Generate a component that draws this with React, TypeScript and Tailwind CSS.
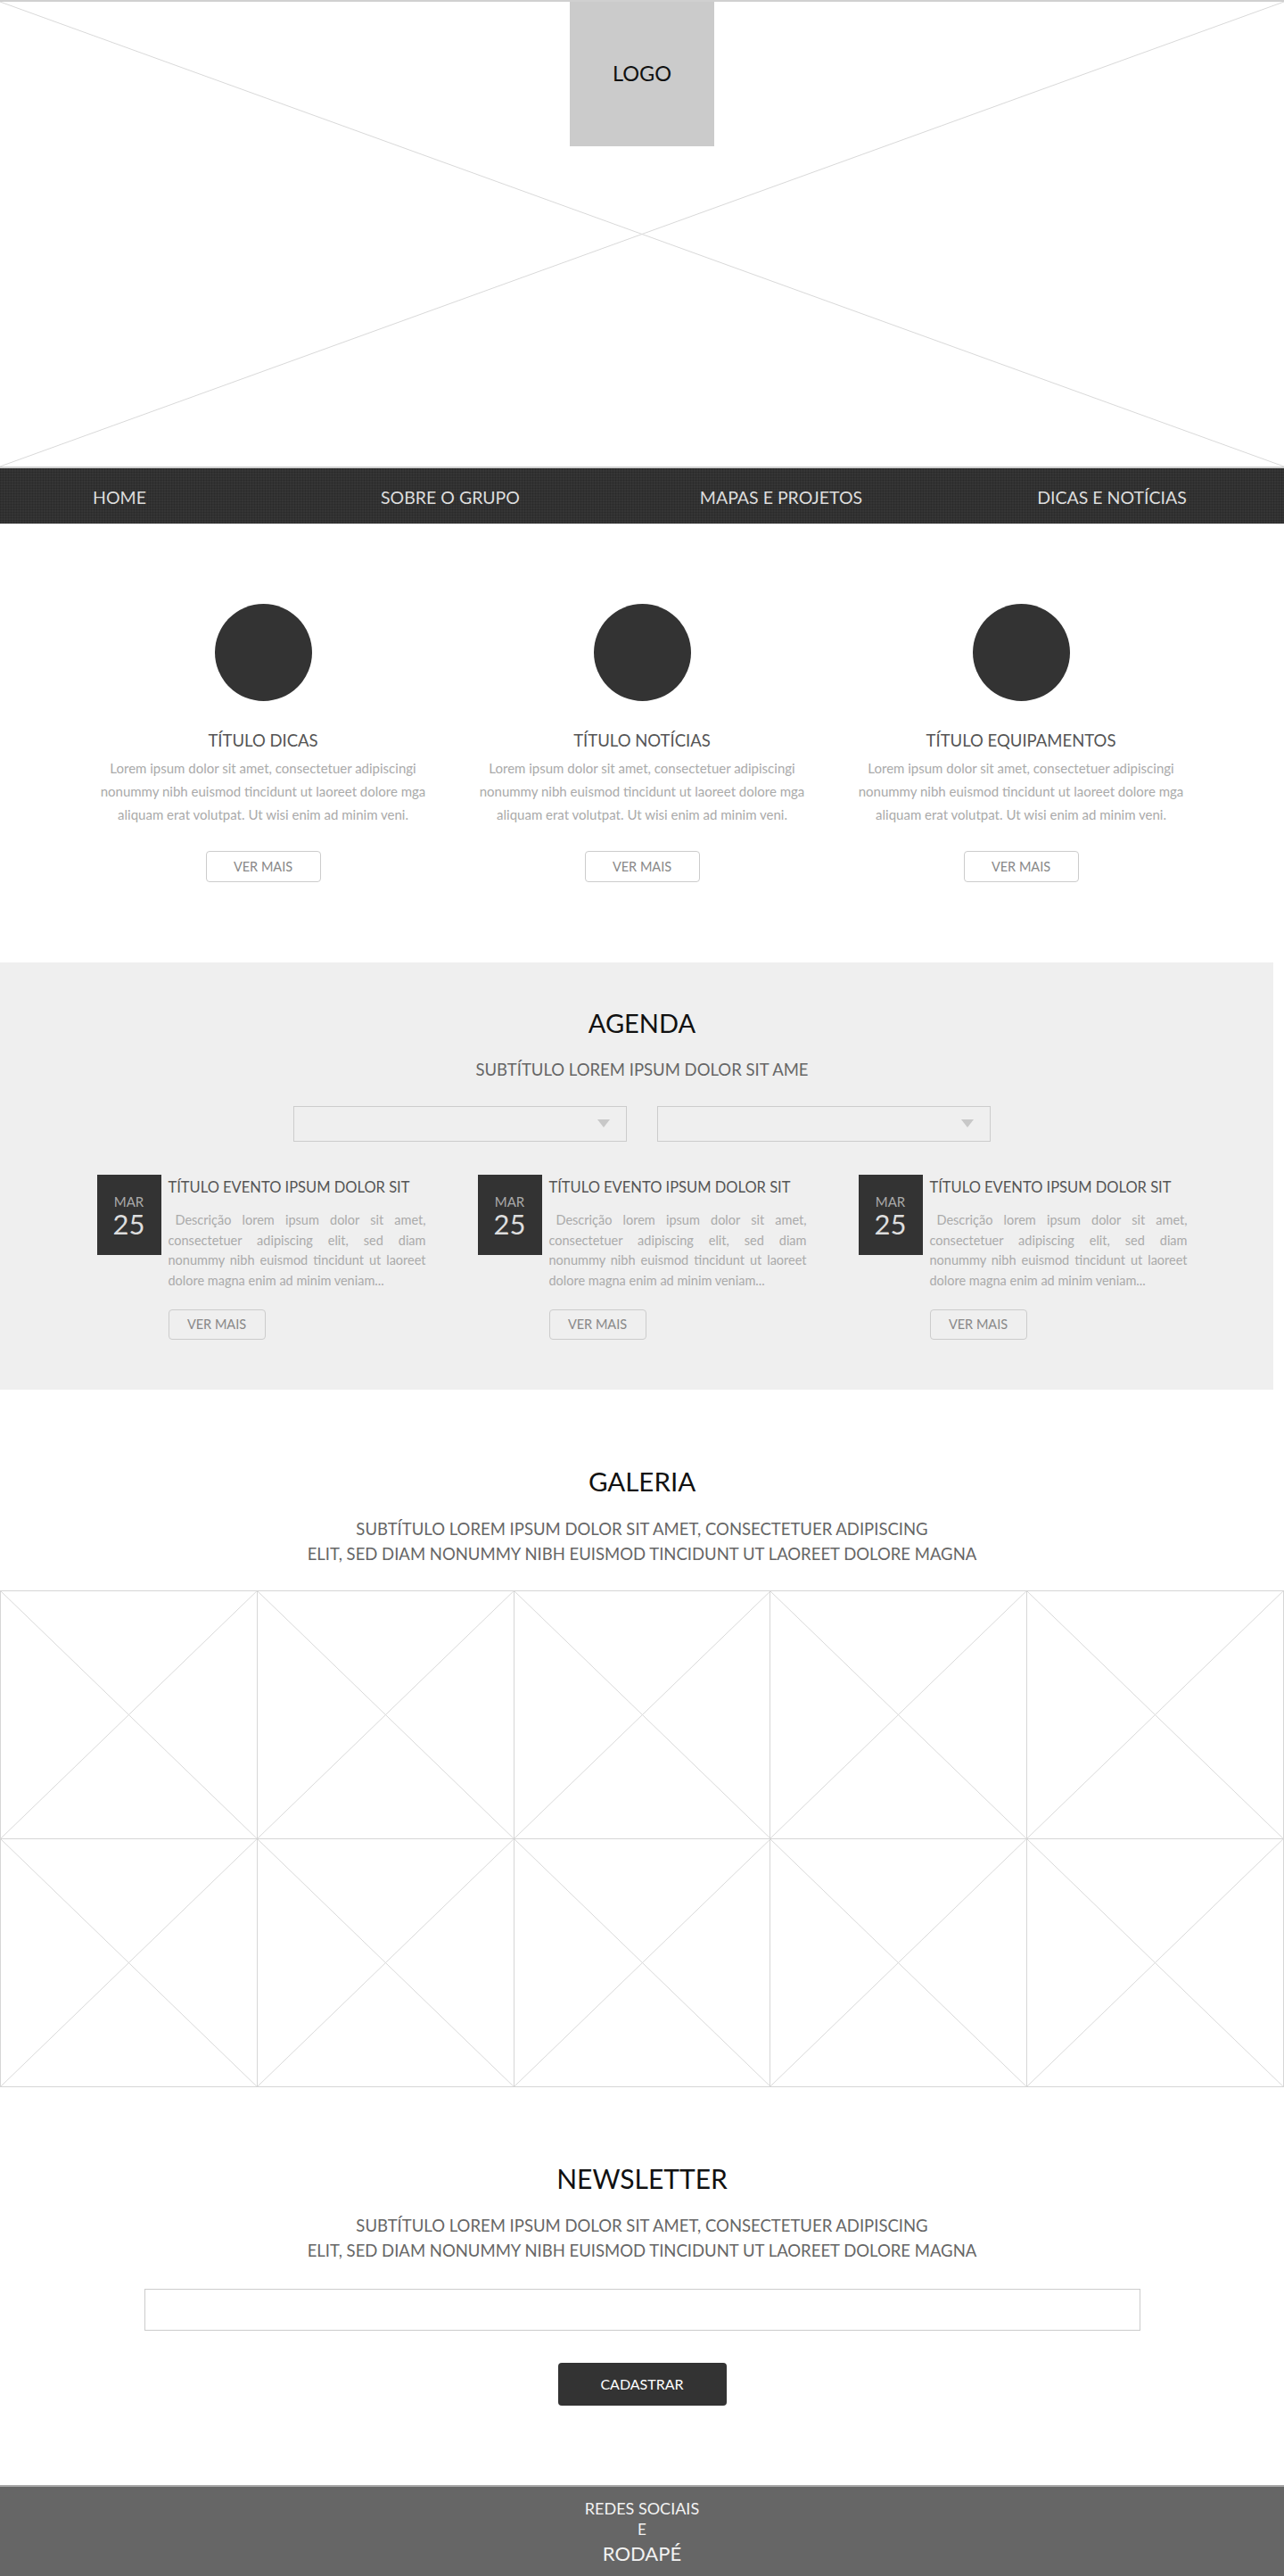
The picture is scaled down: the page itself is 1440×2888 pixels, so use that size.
import React from "react";

const features = [
  { title: "TÍTULO DICAS" },
  { title: "TÍTULO NOTÍCIAS" },
  { title: "TÍTULO EQUIPAMENTOS" },
];

function XBox({ className }: { className?: string }) {
  return (
    <svg className={className} viewBox="0 0 100 100" preserveAspectRatio="none">
      <line x1="0" y1="0" x2="100" y2="100" stroke="#d9d9d9" strokeWidth="1" vectorEffect="non-scaling-stroke" />
      <line x1="100" y1="0" x2="0" y2="100" stroke="#d9d9d9" strokeWidth="1" vectorEffect="non-scaling-stroke" />
    </svg>
  );
}

const descLines = [
  "consectetuer adipiscing elit, sed diam",
  "nonummy nibh euismod tincidunt ut laoreet",
];

function Event() {
  return (
    <div className="flex gap-[8px] w-[369px]">
      <div className="w-[72px] h-[90px] bg-[#333] flex flex-col items-center justify-center shrink-0 pt-[2px]">
        <span className="text-[15px] leading-[17px] text-[#aaa]">MAR</span>
        <span className="text-[31px] leading-[32px] text-[#ddd]">25</span>
      </div>
      <div className="w-[289px]">
        <div className="pt-[3px] text-[16.5px] leading-[22px] text-[#555] whitespace-nowrap">TÍTULO EVENTO IPSUM DOLOR SIT</div>
        <div className="mt-[15px] text-[14.5px] leading-[22.7px] text-[#aaa]">
          <div className="pl-[8px] text-justify [text-align-last:justify] whitespace-nowrap">Descrição lorem ipsum dolor sit amet,</div>
          {descLines.map((l, i) => (
            <div key={i} className="text-justify [text-align-last:justify] whitespace-nowrap">{l}</div>
          ))}
          <div className="whitespace-nowrap">dolore magna enim ad minim veniam...</div>
        </div>
        <div className="mt-[20px] w-[109px] h-[34px] border border-[#ccc] rounded-[4px] flex items-center justify-center text-[14.5px] text-[#888]">
          VER MAIS
        </div>
      </div>
    </div>
  );
}

function Select() {
  return (
    <div className="w-[374px] h-[40px] border border-[#ccc] flex items-center justify-end pr-[18px]">
      <svg width="14" height="10" viewBox="0 0 14 10">
        <polygon points="0,0 14,0 7,9" fill="#c8c8c8" />
      </svg>
    </div>
  );
}

export default function App() {
  return (
    <div className="w-[1440px] bg-white" style={{ fontFamily: "Lato, 'Open Sans', sans-serif" }}>
      {/* Hero */}
      <div className="relative h-[525px] border-t-2 border-b-2 border-[#d0d0d0]">
        <XBox className="absolute inset-0 w-full h-full" />
        <div className="relative flex justify-center">
          <div className="w-[162px] h-[162px] bg-[#cbcbcb] flex items-center justify-center text-[23.5px] text-[#111]">
            LOGO
          </div>
        </div>
      </div>

      {/* Nav */}
      <nav className="h-[62px] bg-[#353535] bg-[repeating-linear-gradient(0deg,rgba(0,0,0,0.12)_0px,rgba(0,0,0,0.12)_1px,transparent_1px,transparent_3px),repeating-linear-gradient(90deg,rgba(0,0,0,0.12)_0px,rgba(0,0,0,0.12)_1px,transparent_1px,transparent_3px)] grid grid-cols-[repeat(4,240px)] gap-x-[131px] pl-[14px] items-center text-[#ddd] text-[19.5px] pt-[3px]">
        <div className="text-center">HOME</div>
        <div className="text-center">SOBRE O GRUPO</div>
        <div className="text-center">MAPAS E PROJETOS</div>
        <div className="text-center">DICAS E NOTÍCIAS</div>
      </nav>

      {/* Features */}
      <section className="pt-[90px] pb-[90px] flex justify-center gap-[55px]">
        {features.map((f) => (
          <div key={f.title} className="w-[370px] flex flex-col items-center text-center">
            <div className="w-[109px] h-[109px] rounded-full bg-[#333]" />
            <div className="mt-[32px] text-[18.5px] leading-[24px] text-[#555]">{f.title}</div>
            <p className="mt-[6px] text-[15px] leading-[26px] text-[#aaa] whitespace-nowrap">
              Lorem ipsum dolor sit amet, consectetuer adipiscingi
              <br />
              nonummy nibh euismod tincidunt ut laoreet dolore mga
              <br />
              aliquam erat volutpat. Ut wisi enim ad minim veni.
            </p>
            <div className="mt-[28px] w-[129px] h-[35px] border border-[#ccc] rounded-[4px] flex items-center justify-center text-[14.5px] text-[#888]">
              VER MAIS
            </div>
          </div>
        ))}
      </section>

      {/* Agenda */}
      <section className="w-[1428px] bg-[#efefef] pt-[50px] pb-[56px] flex flex-col items-center">
        <h2 className="text-[29px] leading-[36px] text-[#111] translate-x-[6px]">AGENDA</h2>
        <div className="mt-[22px] text-[18.5px] leading-[24px] text-[#666] translate-x-[6px]">SUBTÍTULO LOREM IPSUM DOLOR SIT AME</div>
        <div className="mt-[29px] flex gap-[34px] translate-x-[6px]">
          <Select />
          <Select />
        </div>
        <div className="mt-[37px] flex gap-[58px] translate-x-[6px]">
          <Event />
          <Event />
          <Event />
        </div>
      </section>

      {/* Galeria */}
      <section className="pt-[85px] flex flex-col items-center">
        <h2 className="text-[29.5px] leading-[36px] text-[#111]">GALERIA</h2>
        <div className="mt-[21px] text-[18.5px] leading-[28px] text-[#666] text-center">
          SUBTÍTULO LOREM IPSUM DOLOR SIT AMET, CONSECTETUER ADIPISCING
          <br />
          ELIT, SED DIAM NONUMMY NIBH EUISMOD TINCIDUNT UT LAOREET DOLORE MAGNA
        </div>
        <div className="mt-[27px] w-[1440px] grid grid-cols-5 border-t border-l border-[#d6d6d6]">
          {Array.from({ length: 10 }).map((_, i) => (
            <div key={i} className="h-[278px] border-r border-b border-[#d6d6d6]">
              <XBox className="w-full h-full block" />
            </div>
          ))}
        </div>
      </section>

      {/* Newsletter */}
      <section className="pt-[84px] pb-[89px] flex flex-col items-center">
        <h2 className="text-[30px] leading-[36px] text-[#111]">NEWSLETTER</h2>
        <div className="mt-[21px] text-[18.5px] leading-[28px] text-[#666] text-center">
          SUBTÍTULO LOREM IPSUM DOLOR SIT AMET, CONSECTETUER ADIPISCING
          <br />
          ELIT, SED DIAM NONUMMY NIBH EUISMOD TINCIDUNT UT LAOREET DOLORE MAGNA
        </div>
        <div className="mt-[29px] w-[1117px] h-[47px] border border-[#ccc] bg-white" />
        <div className="mt-[36px] w-[189px] h-[48px] bg-[#333] rounded-[4px] flex items-center justify-center text-[16px] text-white">
          CADASTRAR
        </div>
      </section>

      {/* Footer */}
      <footer className="h-[104px] bg-[#666] border-t-2 border-[#a8a8a8] flex flex-col items-center pt-[12px] text-[#f2f2f2]">
        <div className="text-[18px] leading-[24px]">REDES SOCIAIS</div>
        <div className="text-[17px] leading-[24px]">E</div>
        <div className="text-[22px] leading-[30px]">RODAPÉ</div>
      </footer>
    </div>
  );
}
